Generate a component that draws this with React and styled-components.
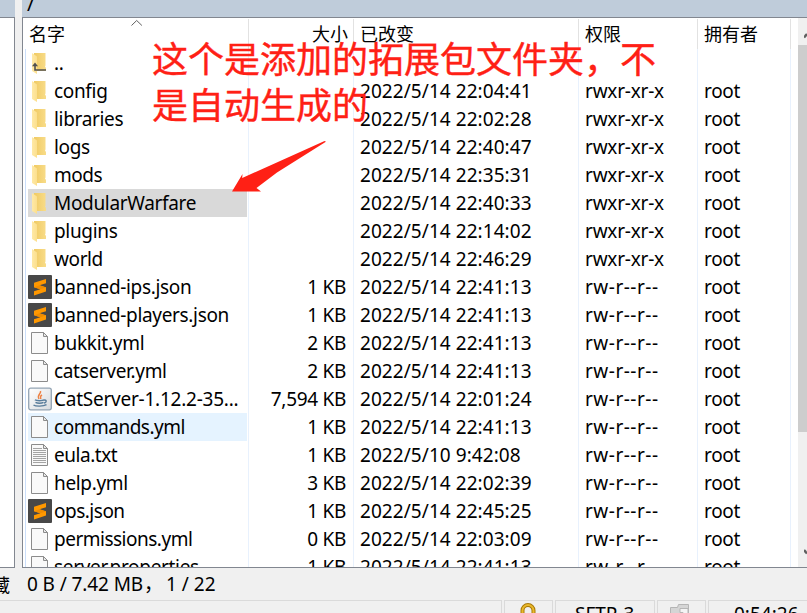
import React from "react";
import styled, { createGlobalStyle } from "styled-components";

const Global = createGlobalStyle`
  * { box-sizing: border-box; }
  html, body { margin: 0; overflow: hidden; }
  body { font-family: "Noto Sans", "Noto Sans CJK SC", sans-serif; font-size: 19px; color: #000; }
  svg { display: block; }
`;

const Screen = styled.div`
  position: relative;
  width: 807px;
  height: 613px;
  overflow: hidden;
  background: #f0f0f0;
  display: grid;
  grid-template-rows: 568px 32px 13px;
`;
const Panels = styled.div`
  display: grid;
  grid-template-columns: 15px 7px 785px;
`;
const LeftPanel = styled.div`
  display: flex;
  flex-direction: column;
`;
const PathBar = styled.div`
  height: 17px;
  flex: none;
  overflow: hidden;
  background: #bfccda;
  padding-left: 5px;
  line-height: 26px;
  display: flex;
  align-items: flex-end;
  font-size: 20px;
`;
const LeftBody = styled.div`
  flex: 1;
  background: #fff;
  border: solid #828790;
  border-width: 1px 1px 1px 0;
`;
const RightPanel = styled.div`
  display: flex;
  flex-direction: column;
  min-width: 0;
`;
const ListFrame = styled.div`
  height: 551px;
  background: #fff;
  border: solid #828790;
  border-width: 1px 0 1px 1px;
  display: grid;
  grid-template-columns: 768px 7px 9px;
  overflow: hidden;
`;
const Listing = styled.div`
  min-width: 0;
  overflow: hidden;
  height: 549px;
`;
const HeaderRow = styled.div`
  height: 31px;
  display: grid;
  grid-template-columns: 226px 105px 225px 119px 93px;
  font: 18px "Noto Sans CJK SC", sans-serif;
`;
const HeaderCell = styled.div`
  position: relative;
  border-right: 1px solid #e2e2e2;
  margin-top: 1px;
  padding: 0 ${(p) => (p.$right ? 5 : 0)}px 0 6px;
  text-align: ${(p) => (p.$right ? "right" : "left")};
  line-height: 29px;
  white-space: nowrap;
`;
const SortMark = styled.svg`
  position: absolute;
  left: 108px;
  top: 0;
`;
const Rows = styled.div`
  margin-left: 2px;
  border-left: 1px solid #cbdffb;
`;
const Row = styled.div`
  height: 28px;
  display: grid;
  grid-template-columns: 223px 105px 225px 119px 93px;
`;
const Cell = styled.div`
  border-right: 1px solid #e8f1fd;
  padding: 0 ${(p) => (p.$right ? 7 : 0)}px 0 ${(p) => (p.$right ? 0 : 6)}px;
  text-align: ${(p) => (p.$right ? "right" : "left")};
  line-height: 28px;
  letter-spacing: ${(p) => p.$track || 0}px;
  white-space: nowrap;
`;
const NameCell = styled.div`
  border-right: 1px solid #e8f1fd;
  padding: 0 1px 0 2px;
`;
const NameBox = styled.div`
  height: 28px;
  display: grid;
  grid-template-columns: 24px 1fr;
  column-gap: 2px;
  align-items: center;
  background: ${(p) => (p.$state === "selected" ? "#d9d9d9" : p.$state === "hover" ? "#e5f3ff" : "transparent")};
`;
const NameText = styled.span`
  line-height: 28px;
  white-space: nowrap;
  letter-spacing: ${(p) => p.$track}px;
`;
const ScrollBar = styled.div`
  grid-column: 3;
  background: #f0f0f0;
  display: grid;
  grid-template-rows: 27px 387px 135px;
`;
const Thumb = styled.div`
  background: #cdcdcd;
`;
const ScrollEnd = styled.div`
  display: flex;
  align-items: ${(p) => (p.$end ? "flex-end" : "flex-start")};
  justify-content: flex-end;
  padding: ${(p) => (p.$end ? "0 0 11px" : "13px 0 0")};
`;
const Summary = styled.div`
  display: flex;
  line-height: 33px;
  white-space: pre;
`;
const SummaryLabel = styled.div`
  margin-left: -8px;
  width: 35px;
  flex: none;
  font: 18px/33px "Noto Sans CJK SC", sans-serif;
`;
const SummaryCount = styled.span`
  width: ${(p) => p.$width}px;
  letter-spacing: ${(p) => p.$track || 0}px;
`;
const StatusBar = styled.div`
  display: grid;
  grid-template-columns: 502px 49px 100px 49px 100px;
  column-gap: 2px;
  height: 13px;
  overflow: hidden;
`;
const StatusCell = styled.div`
  height: 34px;
  border: 1px solid #dadada;
  border-left-width: ${(p) => (p.$first ? 0 : 1)}px;
  padding-left: ${(p) => p.$pad || 0}px;
  line-height: 26px;
  white-space: nowrap;
`;
const Note = styled.div`
  position: absolute;
  left: 152px;
  top: 34px;
  width: 520px;
  font: 36px/46px "Noto Sans CJK SC", sans-serif;
  color: #ff2015;
  -webkit-text-stroke: 0.4px #ff2015;
  white-space: pre;
`;
const Arrow = styled.svg`
  position: absolute;
  left: 230px;
  top: 139px;
`;

const FolderIcon = ({ up }) => (
  <svg width="24" height="28" viewBox="0 0 24 28">
    <defs>
      <linearGradient id="fb" x1="0" x2="1"><stop offset="0" stopColor="#f0ca63" /><stop offset="1" stopColor="#f8dc89" /></linearGradient>
      <linearGradient id="ff" x1="0" x2="1"><stop offset="0" stopColor="#ffe9a6" /><stop offset="1" stopColor="#fbdf8e" /></linearGradient>
    </defs>
    <path d="M6 4h11.500v12.500l-.5 1 1 1.500v3H6z" fill="url(#fb)" />
    <path d="M4 4l5 3.500V25l-5-3z" fill="url(#ff)" />
    {up && <path d="M7 16v5h11" fill="none" stroke="#505050" strokeWidth="1.600" />}
    {up && <path d="M4 17.300L7 13.500l3 3.800z" fill="#505050" />}
  </svg>
);
const SublimeIcon = () => (
  <svg width="24" height="28" viewBox="0 0 24 28">
    <rect y="2" width="24" height="24" rx="1" fill="#484848" />
    <path d="M6 9.700L18 6v4.200l-6.500 2.100 6.500 2v4.200L6 22.400v-4.100l6.300-2L6 14.200z" fill="#ff9800" />
    <path d="M6 14.200l6.300 2.100 5.700-1.900-6.500-2.100z" fill="#f08c00" />
  </svg>
);
const PageIcon = ({ lines }) => (
  <svg width="24" height="28" viewBox="0 0 24 28">
    <path d="M3.500 4.500h12l4 4v17h-16z" fill="#f9f9f9" stroke="#8c8c8c" transform="translate(0 -1)" />
    <path d="M15.500 3.500v4h4z" fill="#e9e9e9" stroke="#8c8c8c" />
    {lines && <path d="M5 7.500h9M5 9.500h13M5 11.500h13M5 13.500h13M5 15.500h13M5 17.500h13M5 19.500h13M5 21.500h13" stroke="#a4a4a4" fill="none" />}
  </svg>
);
const JavaIcon = () => (
  <svg width="24" height="28" viewBox="0 0 24 28">
    <defs><linearGradient id="jb" x1="0" y1="0" x2="1" y2="1"><stop offset="0" stopColor="#fff" /><stop offset="1" stopColor="#d6dade" /></linearGradient></defs>
    <rect x=".7" y="3.200" width="22.600" height="21.600" rx="2" fill="url(#jb)" stroke="#93a4b4" strokeWidth="1.300" />
    <path d="M12.500 6c1 3-4 3.500-1.500 8M14 10c-2.500 1.300-1.500 2-1.200 4" fill="none" stroke="#ee8244" strokeWidth="1.500" />
    <path d="M7 14.800c1 1.200 8 1.200 9 0M7.500 17.300c2 1.200 6 1.200 8 0M15.500 15.200c4-.8 3 2.500.5 2.800M5.500 20c2 1.500 10 1.500 13-.3" fill="none" stroke="#597d9b" strokeWidth="1.400" />
  </svg>
);
const ICONS = {
  up: <FolderIcon up />,
  folder: <FolderIcon />,
  sublime: <SublimeIcon />,
  page: <PageIcon />,
  text: <PageIcon lines />,
  java: <JavaIcon />,
};

const D = "rwxr-xr-x";
const F = "rw-r--r--";
const FILES = [
  { icon: "up", name: ".." },
  { icon: "folder", name: "config", date: "2022/5/14 22:04:41", rights: D },
  { icon: "folder", name: "libraries", date: "2022/5/14 22:02:28", rights: D },
  { icon: "folder", name: "logs", date: "2022/5/14 22:40:47", rights: D },
  { icon: "folder", name: "mods", date: "2022/5/14 22:35:31", rights: D, track: -0.45 },
  { icon: "folder", name: "ModularWarfare", date: "2022/5/14 22:40:33", rights: D, state: "selected" },
  { icon: "folder", name: "plugins", date: "2022/5/14 22:14:02", rights: D },
  { icon: "folder", name: "world", date: "2022/5/14 22:46:29", rights: D, track: -0.4 },
  { icon: "sublime", name: "banned-ips.json", size: "1 KB", date: "2022/5/14 22:41:13", rights: F },
  { icon: "sublime", name: "banned-players.json", size: "1 KB", date: "2022/5/14 22:41:13", rights: F },
  { icon: "page", name: "bukkit.yml", size: "2 KB", date: "2022/5/14 22:41:13", rights: F, track: -0.25 },
  { icon: "page", name: "catserver.yml", size: "2 KB", date: "2022/5/14 22:41:13", rights: F },
  { icon: "java", name: "CatServer-1.12.2-35...", size: "7,594 KB", date: "2022/5/14 22:01:24", rights: F, track: -0.24 },
  { icon: "page", name: "commands.yml", size: "1 KB", date: "2022/5/14 22:41:13", rights: F, state: "hover", track: -0.48 },
  { icon: "text", name: "eula.txt", size: "1 KB", date: "2022/5/10 9:42:08", rights: F, track: -0.45 },
  { icon: "page", name: "help.yml", size: "3 KB", date: "2022/5/14 22:02:39", rights: F },
  { icon: "sublime", name: "ops.json", size: "1 KB", date: "2022/5/14 22:45:25", rights: F, track: -0.5 },
  { icon: "page", name: "permissions.yml", size: "0 KB", date: "2022/5/14 22:03:09", rights: F, track: -0.5 },
  { icon: "page", name: "server.properties", size: "1 KB", date: "2022/5/14 22:41:13", rights: F },
];

const FileRow = ({ file }) => (
  <Row>
    <NameCell>
      <NameBox $state={file.state}>
        {ICONS[file.icon]}
        <NameText $track={file.track ?? -0.33}>{file.name}</NameText>
      </NameBox>
    </NameCell>
    <Cell $right $track={-0.3}>{file.size}</Cell>
    <Cell $track={0.06}>{file.date}</Cell>
    <Cell $track={file.rights === F ? 0.5 : -0.22}>{file.rights}</Cell>
    <Cell $track={-0.3}>{file.date && "root"}</Cell>
  </Row>
);

export default function App() {
  return (
    <Screen>
      <Global />
      <Panels>
        <LeftPanel>
          <PathBar />
          <LeftBody />
        </LeftPanel>
        <div />
        <RightPanel>
          <PathBar>/</PathBar>
          <ListFrame>
            <Listing>
              <HeaderRow>
                <HeaderCell>
                  名字
                  <SortMark width="12" height="8" viewBox="0 0 12 8">
                    <path d="M.5 6.500l5.200-5 5.200 5" fill="none" stroke="#606060" />
                  </SortMark>
                </HeaderCell>
                <HeaderCell $right>大小</HeaderCell>
                <HeaderCell>已改变</HeaderCell>
                <HeaderCell>权限</HeaderCell>
                <HeaderCell>拥有者</HeaderCell>
              </HeaderRow>
              <Rows>
                {FILES.map((file) => (
                  <FileRow key={file.name} file={file} />
                ))}
              </Rows>
            </Listing>
            <ScrollBar>
              <ScrollEnd>
                <svg width="3" height="8" viewBox="0 0 3 8"><path d="M0 6.500L3 3" stroke="#606060" strokeWidth="2.500" /></svg>
              </ScrollEnd>
              <Thumb />
              <ScrollEnd $end>
                <svg width="3" height="8" viewBox="0 0 3 8"><path d="M0 2L3 5.500" stroke="#606060" strokeWidth="2.500" /></svg>
              </ScrollEnd>
            </ScrollBar>
          </ListFrame>
        </RightPanel>
      </Panels>
      <Summary>
        <SummaryLabel>藏</SummaryLabel>
        <SummaryCount $width={117} $track={-0.1}>0 B / 7.42 MB</SummaryCount>
        <SummaryCount $width={22}>，</SummaryCount>
        <SummaryCount $width={60}>1 / 22</SummaryCount>
      </Summary>
      <StatusBar>
        <StatusCell $first />
        <StatusCell $pad={14}>
          <svg width="18" height="32" viewBox="0 0 18 32">
            <path d="M3.500 16V9.500a5.500 5.500 0 0 1 11 0V16" fill="none" stroke="#a87808" strokeWidth="4" />
            <path d="M3.500 16V9.500a5.500 5.500 0 0 1 11 0V16" fill="none" stroke="#e9b92c" strokeWidth="2" />
          </svg>
        </StatusCell>
        <StatusCell $pad={19}>SFTP-3</StatusCell>
        <StatusCell $pad={12}>
          <svg width="20" height="32" viewBox="0 0 20 32">
            <path d="M.5 6.500h7l1-3h10v20H.5z" fill="#d5d5d5" stroke="#b5b5b5" />
            <path d="M10 7.500h8v12h-5v-8h-3z" fill="#f4f4f4" stroke="#b5b5b5" />
          </svg>
        </StatusCell>
        <StatusCell $pad={25}>0:54:26</StatusCell>
      </StatusBar>
      <Note>{"这个是添加的拓展包文件夹，不\n是自动生成的"}</Note>
      <Arrow width="100" height="56" viewBox="0 0 100 56">
        <path d="M2 52.500L12.500 35l-.3 4L94 2.200q2-.7 1.500.7L47 33.500 26.500 49l4.500 3.500z" fill="#ff2015" />
      </Arrow>
    </Screen>
  );
}
